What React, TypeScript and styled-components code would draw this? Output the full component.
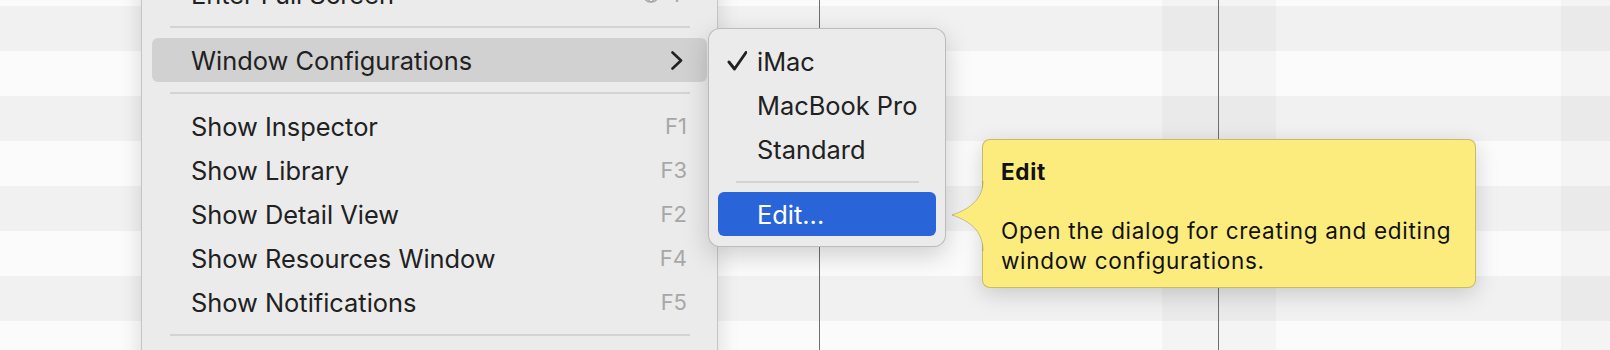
import React from 'react';
import styled, { createGlobalStyle } from 'styled-components';

const GlobalStyle = createGlobalStyle`
  *, *::before, *::after { box-sizing: border-box; }
  html, body { margin: 0; padding: 0; }
  body {
    overflow: hidden;
    background: #fbfbfb;
    font-family: Inter, "Noto Sans", "Liberation Sans", sans-serif;
    -webkit-font-smoothing: antialiased;
  }
`;

const Screen = styled.div`
  position: relative;
  width: 1610px;
  height: 350px;
  overflow: hidden;
`;

const Stripes = styled.div`
  display: flex;
  flex-direction: column;
  margin-top: -39px;
`;

const Stripe = styled.div<{ $shaded: boolean }>`
  height: 45px;
  flex-shrink: 0;
  background: ${(p) => (p.$shaded ? '#f1f1f1' : '#fbfbfb')};
`;

const Columns = styled.div`
  position: absolute;
  inset: 0;
  display: flex;
`;

const Column = styled.div<{ $w?: number; $shaded?: boolean; $line?: boolean }>`
  flex: ${(p) => (p.$w ? `0 0 ${p.$w}px` : '1 1 auto')};
  background: ${(p) => (p.$shaded ? 'rgba(0, 0, 0, 0.028)' : 'transparent')};
  border-left: ${(p) => (p.$line ? '1px solid #6f6f6f' : 'none')};
`;

const Menu = styled.div`
  position: absolute;
  left: 141px;
  top: -39px;
  width: 577px;
  height: 430px;
  padding: 10px;
  background: #ebebeb;
  border: 1px solid rgba(0, 0, 0, 0.16);
  border-radius: 12px;
  box-shadow: 0 0 22px rgba(0, 0, 0, 0.14);
  display: flex;
  flex-direction: column;
`;

const SubMenu = styled.div`
  position: absolute;
  left: 708px;
  top: 28px;
  width: 238px;
  padding: 10px 9px;
  background: #ebebeb;
  border: 1px solid rgba(0, 0, 0, 0.2);
  border-radius: 12px;
  box-shadow: 0 8px 26px rgba(0, 0, 0, 0.18);
  display: flex;
  flex-direction: column;
`;

const Item = styled.div<{ $tone?: 'hover' | 'selected' }>`
  height: 44px;
  flex-shrink: 0;
  display: flex;
  align-items: center;
  padding-right: 20px;
  border-radius: 6px;
  font-size: 25.4px;
  color: ${(p) => (p.$tone === 'selected' ? '#ffffff' : '#212121')};
  background: ${(p) =>
    p.$tone === 'hover' ? '#d1d1d1' : p.$tone === 'selected' ? '#2a64d9' : 'transparent'};
`;

const Gutter = styled.span`
  flex: 0 0 39px;
  display: flex;
  align-items: center;
  padding-left: 9px;
`;

const Label = styled.span`
  flex: 1;
  white-space: nowrap;
`;

const Shortcut = styled.span`
  display: flex;
  align-items: center;
  gap: 14px;
  font-size: 22px;
  color: #a7a7a7;
`;

const Separator = styled.div<{ $h?: number }>`
  height: ${(p) => p.$h ?? 22}px;
  flex-shrink: 0;
  display: flex;
  align-items: center;
  padding: 0 17px 0 18px;

  &::after {
    content: '';
    flex: 1;
    height: 2px;
    background: #d3d3d3;
  }
`;

const Chevron = styled.svg`
  width: 12px;
  height: 19px;
  margin-right: 4px;
`;

const Tooltip = styled.div`
  position: absolute;
  left: 982px;
  top: 139px;
  width: 494px;
  height: 149px;
  padding: 17px 18px 11px;
  background: #fcec7e;
  border: 1px solid rgba(0, 0, 0, 0.2);
  border-radius: 8px;
  box-shadow: 0 6px 22px rgba(0, 0, 0, 0.17);
  font-size: 22.5px;
  line-height: 29.5px;
  letter-spacing: 0.7px;
  color: #111111;
`;

const TipTitle = styled.div`
  font-weight: 700;
`;

const TipBody = styled.div`
  margin-top: 29.5px;
`;

const TipArrow = styled.svg`
  position: absolute;
  left: -32px;
  top: 41px;
  width: 34px;
  height: 70px;
  overflow: visible;
`;

const Check = () => (
  <svg width="20" height="20" viewBox="0 0 20 20">
    <path d="M2 11 L7.5 18 L19 1.5" fill="none" stroke="#212121" strokeWidth="2.9" strokeLinecap="round" strokeLinejoin="round" />
  </svg>
);

const Globe = () => (
  <svg width="18" height="18" viewBox="0 0 18 18" fill="none" stroke="#a7a7a7" strokeWidth="1.4">
    <circle cx="9" cy="9" r="8" />
    <ellipse cx="9" cy="9" rx="3.5" ry="8" />
    <path d="M1 9 H17 M2.5 4.5 H15.5 M2.5 13.5 H15.5" />
  </svg>
);

const stripes = Array.from({ length: 10 }, (_, i) => i % 2 === 1);

const items = [
  ['Show Inspector', 'F1'],
  ['Show Library', 'F3'],
  ['Show Detail View', 'F2'],
  ['Show Resources Window', 'F4'],
  ['Show Notifications', 'F5'],
];

export default function App() {
  return (
    <Screen>
      <GlobalStyle />
      <Stripes>
        {stripes.map((s, i) => (
          <Stripe key={i} $shaded={s} />
        ))}
      </Stripes>
      <Columns>
        <Column $w={819} />
        <Column $w={343} $line />
        <Column $w={56} $shaded />
        <Column $w={58} $shaded $line />
        <Column $w={285} />
        <Column $shaded />
      </Columns>

      <Menu>
        <Item>
          <Gutter />
          <Label>Enter Full Screen</Label>
          <Shortcut>
            <Globe />
            F
          </Shortcut>
        </Item>
        <Separator />
        <Item $tone="hover">
          <Gutter />
          <Label>Window Configurations</Label>
          <Chevron viewBox="0 0 12 19">
            <path d="M1.5 1.5 L10 9.5 L1.5 17.5" fill="none" stroke="#212121" strokeWidth="2.6" strokeLinecap="round" strokeLinejoin="round" />
          </Chevron>
        </Item>
        <Separator />
        {items.map(([label, key]) => (
          <Item key={label}>
            <Gutter />
            <Label>{label}</Label>
            <Shortcut>{key}</Shortcut>
          </Item>
        ))}
        <Separator />
      </Menu>

      <SubMenu>
        <Item>
          <Gutter>
            <Check />
          </Gutter>
          <Label>iMac</Label>
        </Item>
        <Item>
          <Gutter />
          <Label>MacBook Pro</Label>
        </Item>
        <Item>
          <Gutter />
          <Label>Standard</Label>
        </Item>
        <Separator $h={21} />
        <Item $tone="selected">
          <Gutter />
          <Label>Edit...</Label>
        </Item>
      </SubMenu>

      <Tooltip>
        <TipArrow viewBox="0 0 34 70">
          <path d="M32 0 C32 18 19 28 1 34 C19 40 32 50 32 70 L35 70 L35 0 Z" fill="#fcec7e" />
          <path d="M32 0 C32 18 19 28 1 34 C19 40 32 50 32 70" fill="none" stroke="rgba(0,0,0,0.2)" strokeWidth="1" />
        </TipArrow>
        <TipTitle>Edit</TipTitle>
        <TipBody>Open the dialog for creating and editing window configurations.</TipBody>
      </Tooltip>
    </Screen>
  );
}
